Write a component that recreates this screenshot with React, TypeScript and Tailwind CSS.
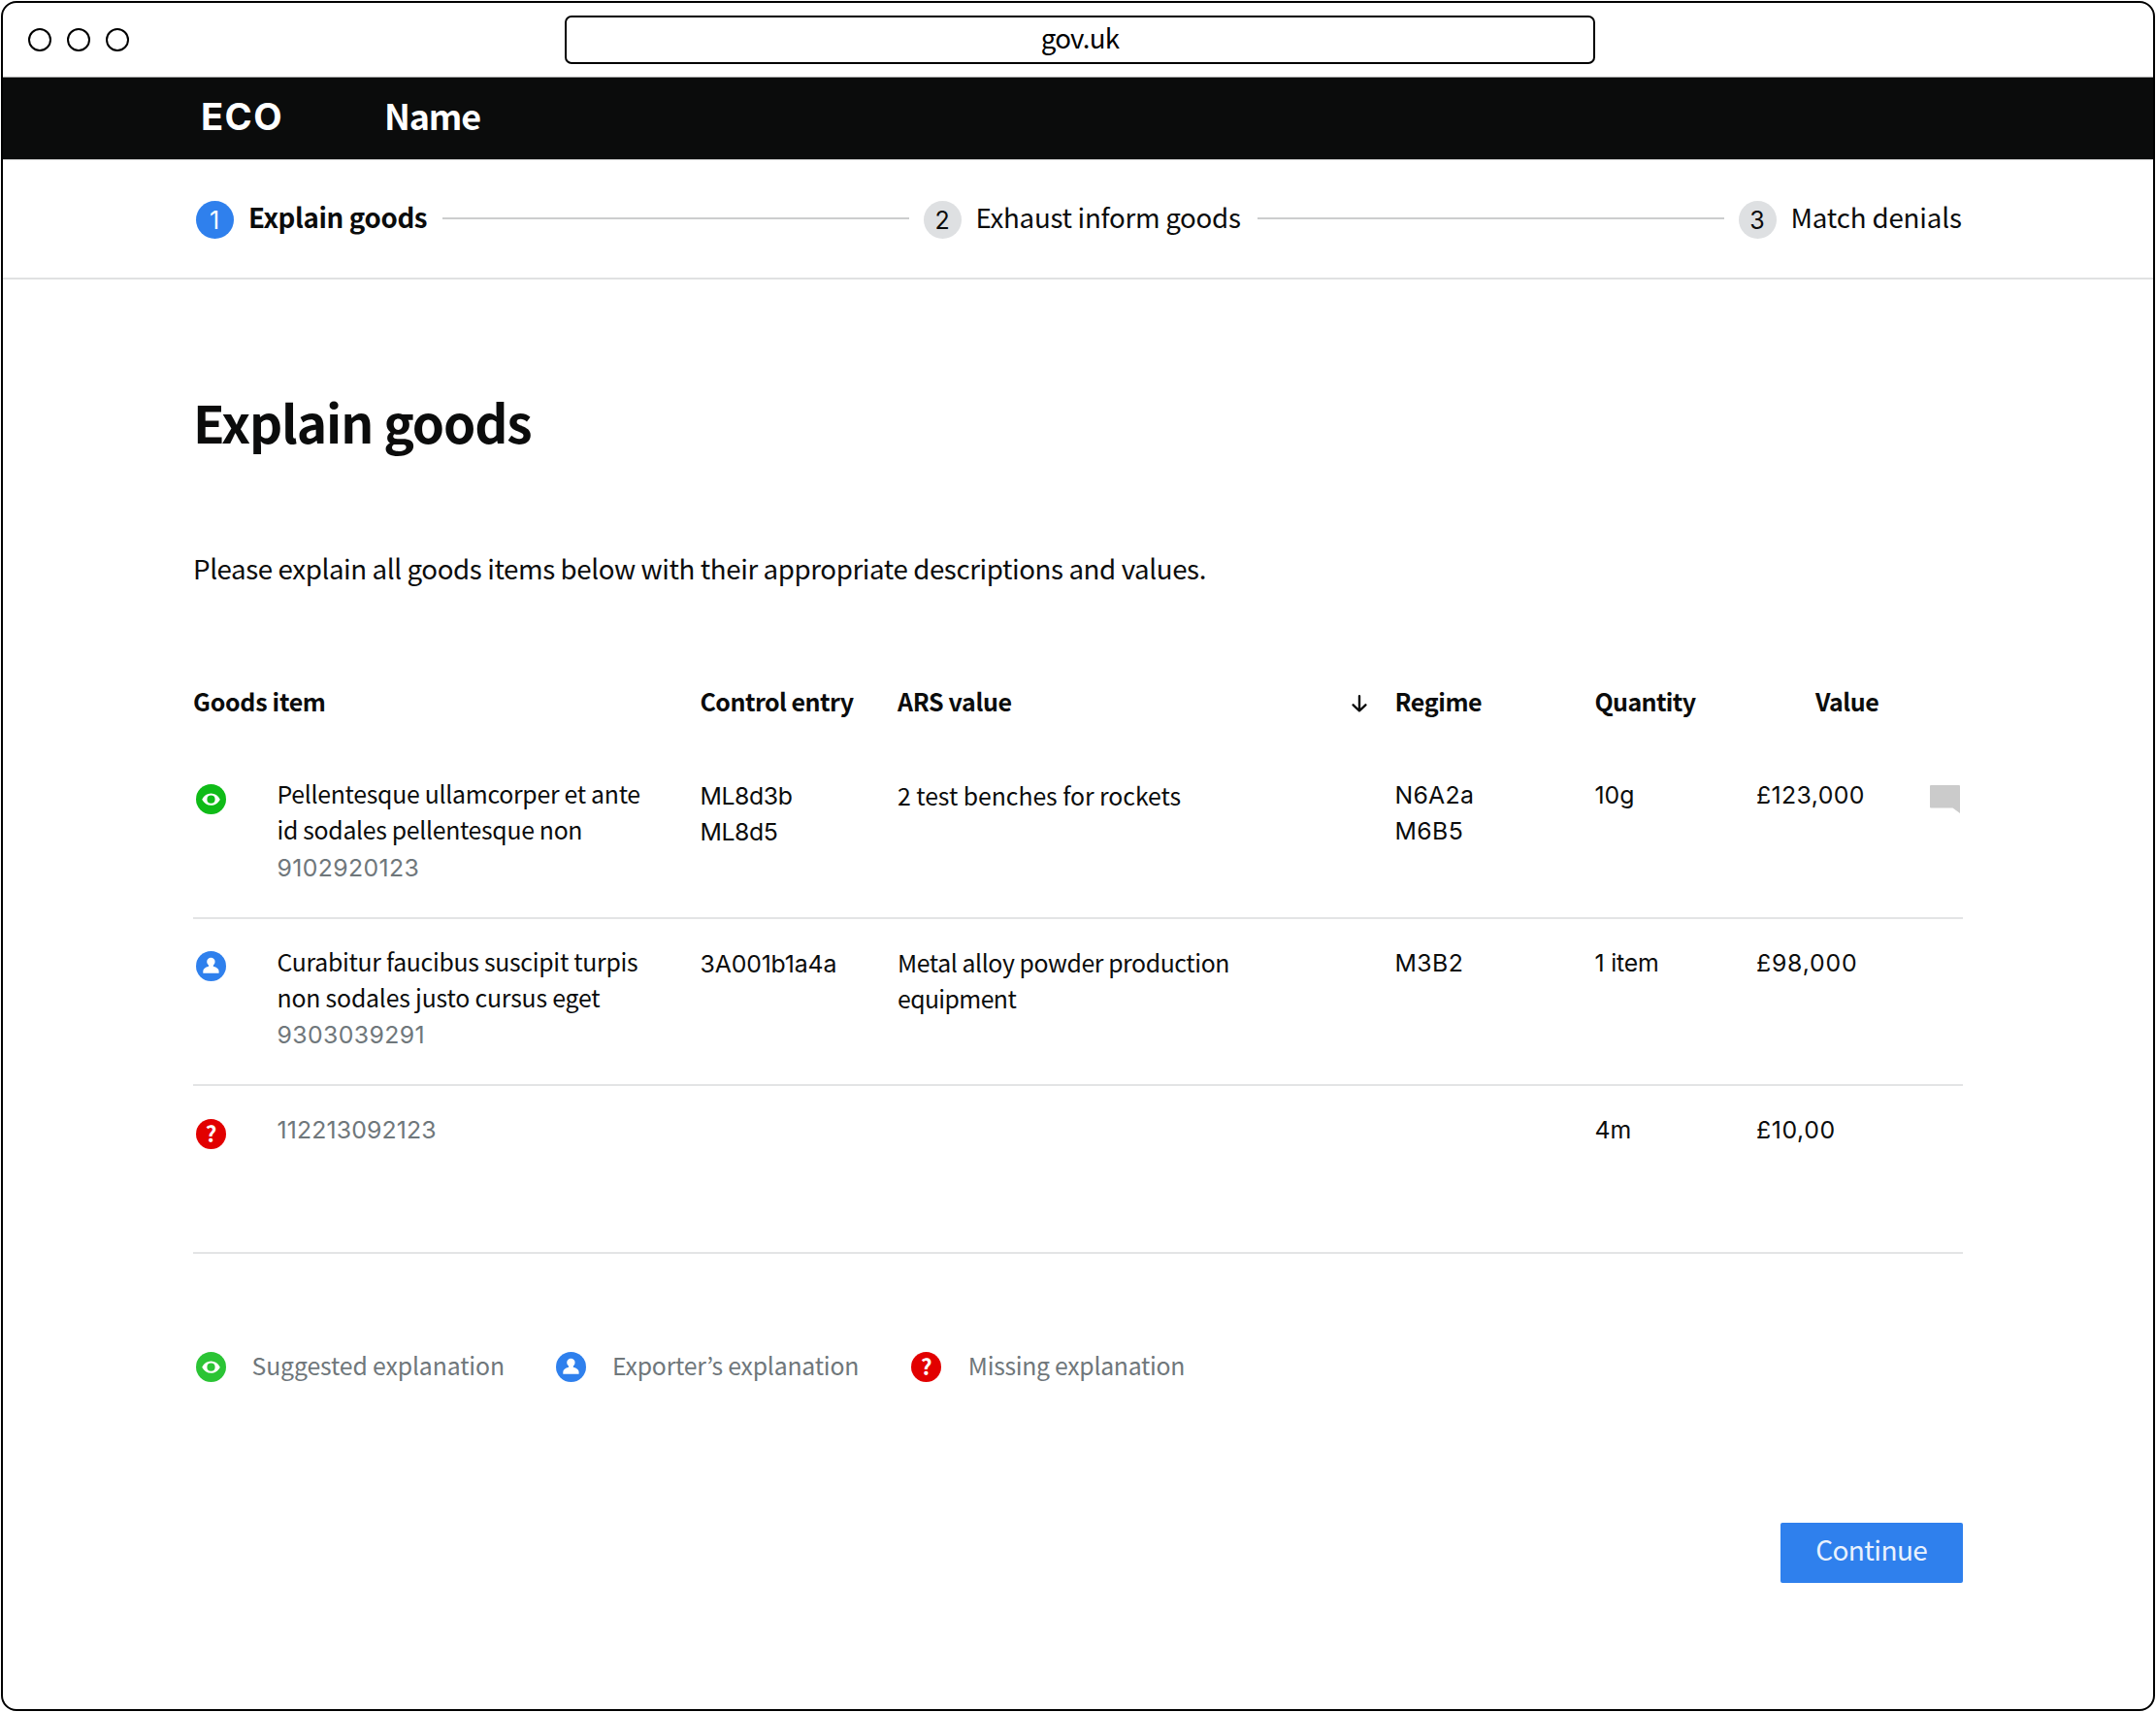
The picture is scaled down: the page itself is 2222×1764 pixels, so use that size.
import React from "react";

type Status = "suggested" | "exporter" | "missing";

function EyeIcon({ className }: { className: string }) {
  return (
    <svg viewBox="0 0 31 31" className={`size-[31px] shrink-0 ${className}`}>
      <circle cx="15.5" cy="15.5" r="15.5" fill="currentColor" />
      <path d="M6.2 15.7C8.2 11.8 11.6 9.6 15.5 9.6s7.3 2.2 9.3 6.1c-2 3.9-5.4 6.1-9.3 6.1s-7.3-2.2-9.3-6.1z" fill="#fff" />
      <circle cx="15.5" cy="15.7" r="4.1" fill="currentColor" />
    </svg>
  );
}

function PersonIcon() {
  return (
    <svg viewBox="0 0 31 31" className="size-[31px] shrink-0">
      <circle cx="15.5" cy="15.5" r="15.5" fill="#2f80ed" />
      <circle cx="15.4" cy="11" r="4.2" fill="#fff" />
      <path d="M13 13.5h4.8v2.200c3.600.9 5.800 2.600 5.800 5v2H7.300v-2c0-2.400 2.200-4.100 5.700-5z" fill="#fff" />
    </svg>
  );
}

function StatusIcon({ status, legend }: { status: Status; legend?: boolean }) {
  if (status === "suggested") return <EyeIcon className={legend ? "text-[#2bc435]" : "text-[#0fbb17]"} />;
  if (status === "exporter") return <PersonIcon />;
  return (
    <span className="flex size-[31px] shrink-0 items-center justify-center rounded-full bg-[#e20000] pb-[2px] text-[22.5px] font-bold leading-none text-white">
      ?
    </span>
  );
}

function Step({ n, active }: { n: number; active?: boolean }) {
  return (
    <span
      className={`mt-[2px] flex size-[39px] shrink-0 items-center justify-center rounded-full pt-[2px] font-['Inter',sans-serif] text-[25px] leading-none ${
        active ? "bg-[#2f80ed] pr-[1px] text-white" : "bg-[#dee0e2] text-[#0b0c0c]"
      }`}
    >
      {n}
    </span>
  );
}

const COLS = "grid grid-cols-[86.5px_436px_203.5px_512.5px_206px_166.5px_179px_33px]";
const CODE = "font-['Inter',sans-serif]";

type Line = [text: string, style: string];
type Row = {
  status: Status;
  item: Line[];
  control: Line[];
  ars: Line[];
  regime: Line[];
  quantity: Line[];
  value: Line[];
  comment?: boolean;
};

const rows: Row[] = [
  {
    status: "suggested",
    item: [
      ["Pellentesque ullamcorper et ante", "tracking-[-0.27px]"],
      ["id sodales pellentesque non", "tracking-[-0.31px]"],
      ["9102920123", `${CODE} text-[#6f777b] tracking-[0.37px]`],
    ],
    control: [
      ["ML8d3b", `${CODE} tracking-[-0.4px]`],
      ["ML8d5", `${CODE} tracking-[-0.4px]`],
    ],
    ars: [["2 test benches for rockets", "tracking-[-0.04px]"]],
    regime: [
      ["N6A2a", `${CODE} tracking-[0.28px]`],
      ["M6B5", `${CODE} tracking-[0.4px]`],
    ],
    quantity: [["10g", CODE]],
    value: [["£123,000", `${CODE} tracking-[0.42px]`]],
    comment: true,
  },
  {
    status: "exporter",
    item: [
      ["Curabitur faucibus suscipit turpis", "tracking-[-0.28px]"],
      ["non sodales justo cursus eget", "tracking-[-0.18px]"],
      ["9303039291", `${CODE} text-[#6f777b] tracking-[0.4px]`],
    ],
    control: [["3A001b1a4a", `${CODE} tracking-[-0.14px]`]],
    ars: [
      ["Metal alloy powder production", "tracking-[-0.4px]"],
      ["equipment", "tracking-[-0.6px]"],
    ],
    regime: [["M3B2", `${CODE} tracking-[0.4px]`]],
    quantity: [["1 item", `${CODE} tracking-[-0.2px]`]],
    value: [["£98,000", `${CODE} tracking-[0.8px]`]],
  },
  {
    status: "missing",
    item: [["112213092123", `${CODE} text-[#6f777b] tracking-[0.14px]`]],
    control: [],
    ars: [],
    regime: [],
    quantity: [["4m", CODE]],
    value: [["£10,00", `${CODE} tracking-[0.6px]`]],
  },
];

function Lines({ lines }: { lines: Line[] }) {
  return (
    <>
      {lines.map(([text, style]) => (
        <div key={text} className="h-[37.4px] whitespace-nowrap">
          <span className={style}>{text}</span>
        </div>
      ))}
    </>
  );
}

function GoodsRow({ row }: { row: Row }) {
  return (
    <div className={`${COLS} h-[172.5px] border-b-2 border-[#e3e4e5] pt-[25px] text-[24.8px] leading-[37.4px]`}>
      <div className="pl-[3px] pt-[8.5px]">
        <StatusIcon status={row.status} />
      </div>
      <div>
        <Lines lines={row.item} />
      </div>
      <div className="pt-[1px]">
        <Lines lines={row.control} />
      </div>
      <div className="pt-[1.5px]">
        <Lines lines={row.ars} />
      </div>
      <div>
        <Lines lines={row.regime} />
      </div>
      <div>
        <Lines lines={row.quantity} />
      </div>
      <div>
        <Lines lines={row.value} />
      </div>
      <div className="pt-[10px]">
        {row.comment && (
          <svg viewBox="0 0 31 29" className="h-[29px] w-[31px]">
            <path d="M1 0h29a1 1 0 0 1 1 1v28l-7.5-5.5H1a1 1 0 0 1-1-1V1a1 1 0 0 1 1-1z" fill="#cbcbcb" />
          </svg>
        )}
      </div>
    </div>
  );
}

export default function App() {
  return (
    <div className="h-[1764px] w-[2222px] bg-white p-[1px] font-['Noto_Sans_CJK_KR',sans-serif] text-[#0b0c0c]">
      <div className="flex h-[1762px] w-[2220px] flex-col overflow-hidden rounded-[16px] border-2 border-black">
        <div className="flex h-[76px] shrink-0 items-center pl-[26px]">
          <div className="flex gap-4">
            <span className="size-6 rounded-full border-2 border-black" />
            <span className="size-6 rounded-full border-2 border-black" />
            <span className="size-6 rounded-full border-2 border-black" />
          </div>
          <div className="ml-[449px] flex h-[50px] w-[1062px] items-center justify-center rounded-[7px] border-2 border-black pb-[4px] text-[27.7px] leading-none tracking-[-0.75px] text-black">
            gov.uk
          </div>
        </div>

        <header className="flex h-[86px] shrink-0 items-baseline border-b border-t border-b-[#c4c4c4] border-t-[#999] bg-[#0b0c0c] pl-[204px] font-bold leading-[77px] text-white">
          <span className="w-[189px] font-['Inter',sans-serif] text-[38.2px] font-bold tracking-[1.4px]">ECO</span>
          <span className="text-[35.9px] tracking-[-1.14px]">Name</span>
        </header>

        <nav className="flex h-[123px] shrink-0 items-center border-b-2 border-[#e0e1e2] pl-[199px] pr-[196px] text-[27.7px] leading-none">
          <Step n={1} active />
          <span className="ml-[15px] w-[200px] shrink-0 pb-[3px] font-bold tracking-[-0.36px]">Explain goods</span>
          <span className="mb-[2px] mr-[15px] h-[2px] flex-1 bg-[#cccdce]" />
          <Step n={2} />
          <span className="ml-[15px] w-[290.5px] shrink-0 pb-[3px] tracking-[-0.28px]">Exhaust inform goods</span>
          <span className="mb-[2px] mr-[15px] h-[2px] flex-1 bg-[#cccdce]" />
          <Step n={3} />
          <span className="ml-[15px] w-[177.5px] shrink-0 pb-[3px] tracking-[-0.15px]">Match denials</span>
        </nav>

        <main className="flex flex-col pl-[196px] pr-[196px]">
          <h1 className="mt-[114px] text-[53.2px] font-bold leading-[64px] tracking-[-1.1px]">Explain goods</h1>
          <p className="mt-[99px] text-[27.7px] leading-[40px] tracking-[-0.4px]">
            Please explain all goods items below with their appropriate descriptions and values.
          </p>

          <div className={`${COLS} mt-[98px] text-[25px] font-bold leading-[38px]`}>
            <div className="col-span-2 tracking-[-0.3px]">Goods item</div>
            <div className="tracking-[-0.54px]">Control entry</div>
            <div className="flex justify-between pr-[29px]">
              <span className="tracking-[-0.35px]">ARS value</span>
              <svg
                viewBox="0 0 16 18"
                className="mt-[13px] h-[18px] w-4"
                fill="none"
                stroke="#0b0c0c"
                strokeWidth="2.4"
                strokeLinecap="round"
                strokeLinejoin="round"
              >
                <path d="M8 1.3v15M1.6 10.3l6.4 6.2 6.4-6.2" />
              </svg>
            </div>
            <div className="tracking-[-0.4px]">Regime</div>
            <div className="tracking-[-0.64px]">Quantity</div>
            <div className="pl-[61px] tracking-[-0.5px]">Value</div>
          </div>

          <div className="mt-[33px]">
            {rows.map((row) => (
              <GoodsRow key={row.status} row={row} />
            ))}
          </div>

          <div className="mt-[98px] flex h-[38px] items-center pl-[3px] text-[24.8px] leading-none text-[#6f777b]">
            <div className="flex w-[370.5px] items-center gap-[26.5px]">
              <StatusIcon status="suggested" legend />
              <span className="pb-[5px] tracking-[-0.13px]">Suggested explanation</span>
            </div>
            <div className="flex w-[366.8px] items-center gap-[27.5px]">
              <StatusIcon status="exporter" legend />
              <span className="pb-[5px] tracking-[-0.22px]">Exporter’s explanation</span>
            </div>
            <div className="flex items-center gap-[27.5px]">
              <StatusIcon status="missing" legend />
              <span className="pb-[5px] tracking-[-0.3px]">Missing explanation</span>
            </div>
          </div>

          <button className="mt-[141px] flex h-[62px] w-[188.5px] items-center justify-center self-end rounded-[2px] bg-[#2f80ed] pb-[8px] text-[28px] leading-none tracking-[-0.58px] text-[#eaf2fd]">
            Continue
          </button>
        </main>
      </div>
    </div>
  );
}
